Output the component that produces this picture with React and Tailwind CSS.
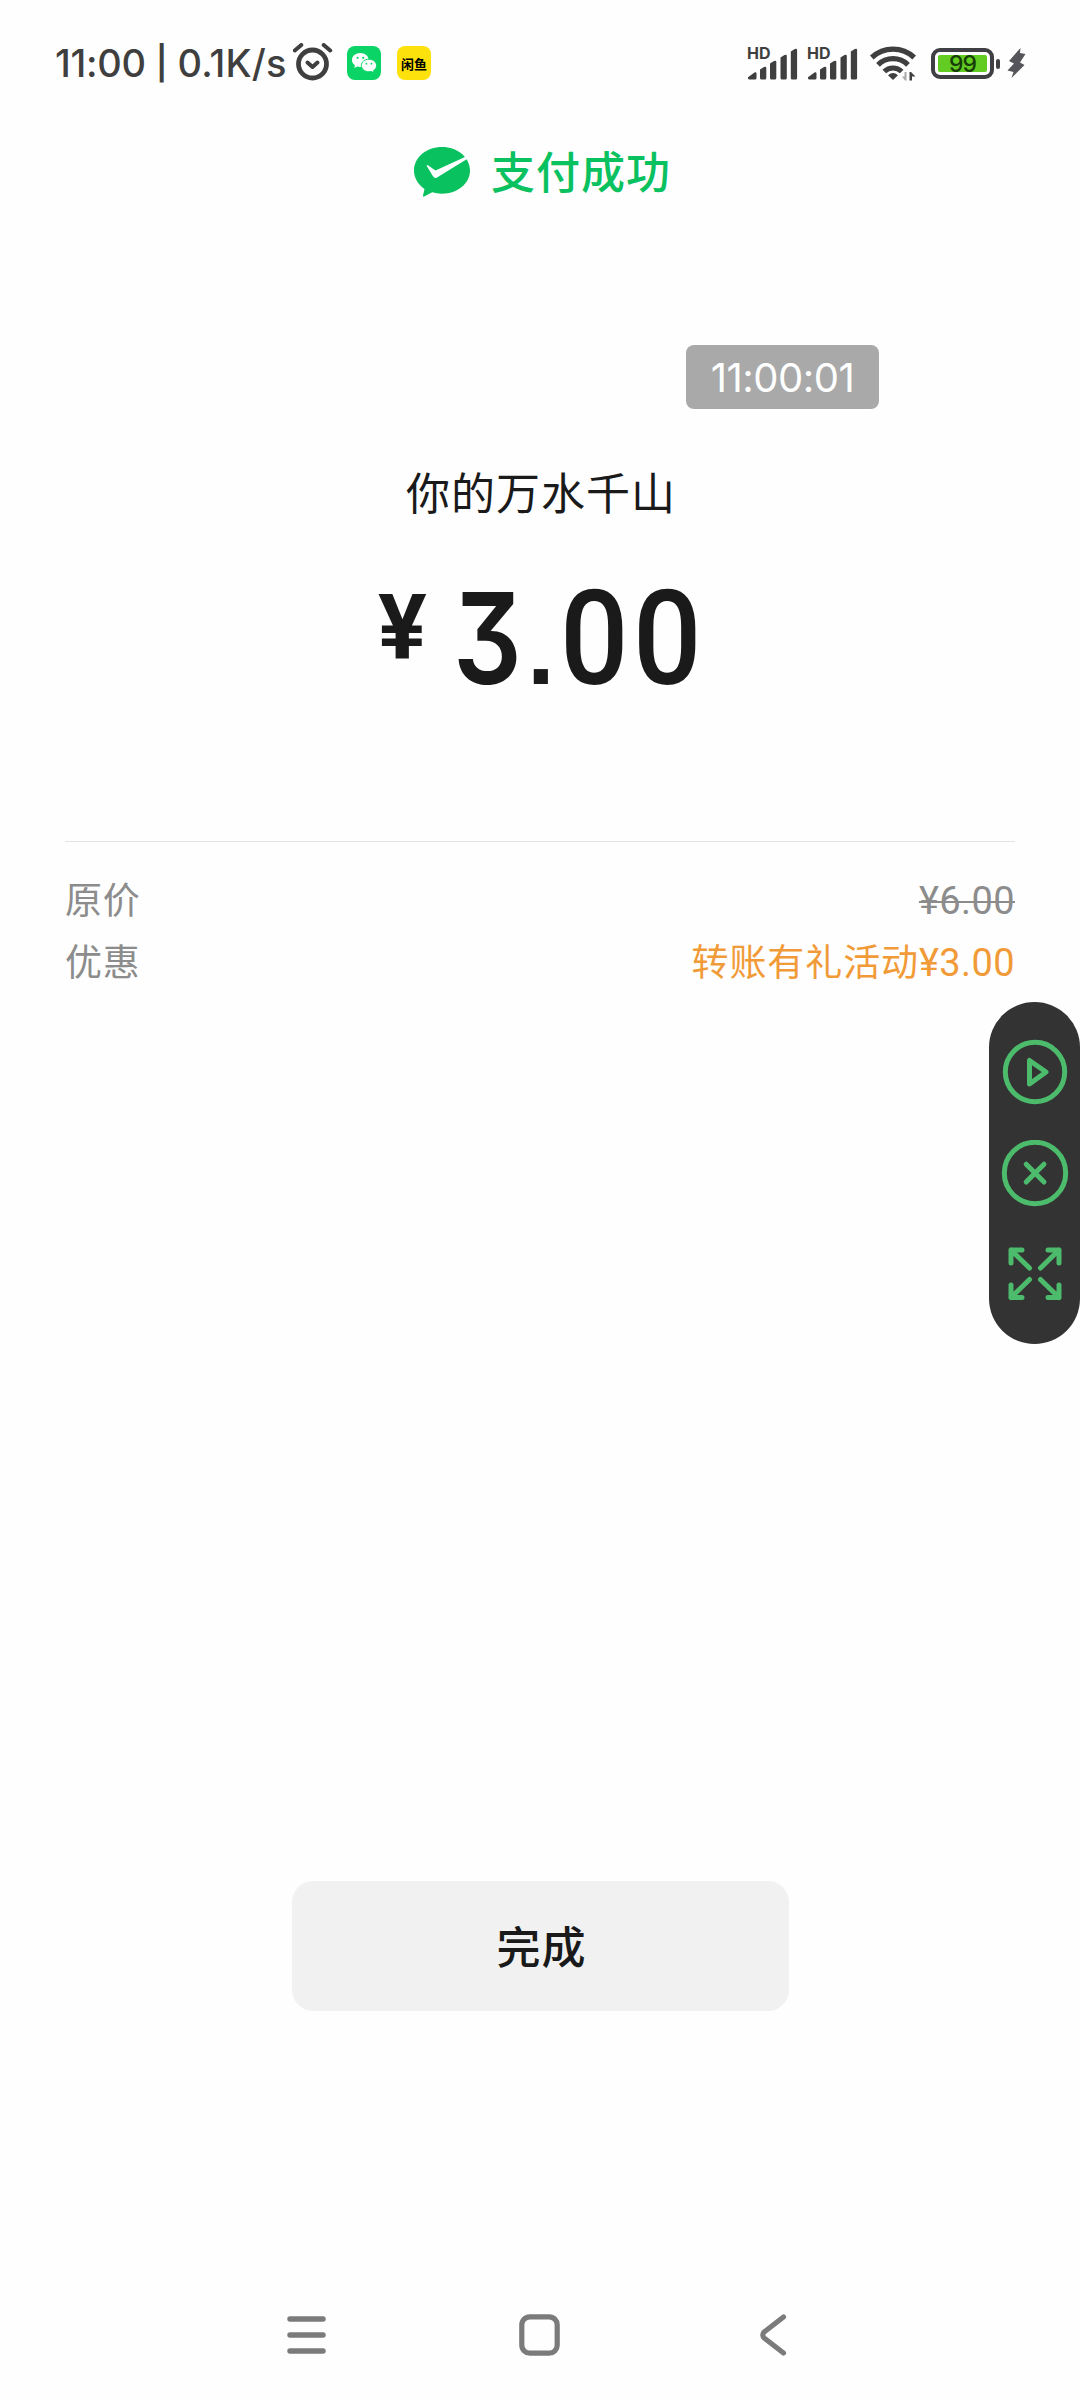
function AlarmIcon() {
    return (
        <svg className="w-10 h-[38px]" viewBox="0 0 40 38" fill="none" stroke="#3f3f3f" strokeLinecap="round">
            <circle cx="19.500" cy="21" r="14" strokeWidth="4.8" />
            <path d="M14.500 19.500l5 4.500 5-4.500" strokeWidth="4" strokeLinejoin="round" />
            <path d="M1.800 7.500l6.500-5.500M37.200 7.500l-6.500-5.500" strokeWidth="4" />
        </svg>
    );
}

function WechatIcon() {
    return (
        <svg className="w-[34px] h-[34px]" viewBox="0 0 34 34">
            <rect width="34" height="34" rx="8" fill="#0bd467" />
            <path d="M13.3 7C8.600 7 5 10 5 14c0 2.300 1.200 4.100 3 5.300l-.8 2.700 3-1.500c1 .3 2 .4 3.100.4 4.700 0 8.300-3 8.300-6.900S18 7 13.300 7z" fill="#fff" />
            <path d="M22 13.200c-4.300 0-7.700 2.800-7.700 6.300s3.400 6.300 7.700 6.300c.9 0 1.700-.1 2.500-.3l2.700 1.400-.7-2.300c1.900-1.200 3.100-3 3.100-5.100 0-3.500-3.400-6.300-7.600-6.300z" fill="#fff" stroke="#0bd467" strokeWidth="1" />
            <circle cx="10.600" cy="11.800" r="1.100" fill="#0bd467" />
            <circle cx="16.200" cy="11.800" r="1.100" fill="#0bd467" />
            <circle cx="19.400" cy="17.700" r=".9" fill="#0bd467" />
            <circle cx="24.400" cy="17.700" r=".9" fill="#0bd467" />
        </svg>
    );
}

function Signal() {
    return (
        <div className="relative w-[51px] h-[33px]">
            <span className='absolute left-0 -top-[1px] text-[16px] leading-[15px] font-bold font-["Inter",sans-serif]'>HD</span>
            <svg className="w-[51px] h-[33px]" viewBox="0 0 51 33" fill="#3f3f3f">
                <path d="M2 29.500l5.500-4a1.200 1.200 0 0 1 2 .8V31A1.500 1.500 0 0 1 8 32.500H3a1.500 1.500 0 0 1-1-3z" />
                <path d="M13 22.500l4-2.500q2.300-1 2.300 1V31a1.500 1.500 0 0 1-1.500 1.500h-3.300A1.500 1.500 0 0 1 13 31z" />
                <path d="M23 16.500l4-2.500q2.300-1 2.300 1V31a1.500 1.500 0 0 1-1.500 1.500h-3.300A1.500 1.500 0 0 1 23 31z" />
                <path d="M33.500 10.500l4-2.500q2.300-1 2.300 1V31a1.500 1.500 0 0 1-1.500 1.500H35A1.500 1.500 0 0 1 33.500 31z" />
                <path d="M43.800 4.500l4-2.500q2.300-1 2.300 1V31a1.500 1.500 0 0 1-1.500 1.500h-3.300A1.500 1.500 0 0 1 43.800 31z" />
            </svg>
        </div>
    );
}

function WifiIcon() {
    return (
        <svg className="w-[47px] h-[35px]" viewBox="0 0 47 35" fill="none" stroke="#3f3f3f" strokeWidth="5.200">
            <path d="M1.800 11.500a31 31 0 0 1 42.400 0" />
            <path d="M8 18.800a21.500 21.500 0 0 1 30 0" />
            <path d="M14.300 25.500a12.500 12.500 0 0 1 17.400 0" />
            <path d="M18 29.200q5-4.400 10 0L23 34z" fill="#3f3f3f" stroke="none" />
            <path d="M36.500 26v8.500h-1.500l-3-4h2.500v-4.500z" fill="#aaa" stroke="none" />
            <path d="M39.500 34.500V26h1.500l4.500 4.500h-3.500v4z" fill="#3f3f3f" stroke="none" />
        </svg>
    );
}

function Battery() {
    return (
        <div className="flex items-center gap-[2px]">
            <div className="w-[63px] h-[31px] rounded-[9px] border-4 border-[#403f44] p-[3px]">
                <div className='w-full h-full pt-[1px] rounded-[2px] bg-[#62cc22] flex items-center justify-center text-[23px] leading-none font-medium text-[#173d08] font-["Inter",sans-serif] tracking-[-1px]'>
                    99
                </div>
            </div>
            <div className="w-1 h-[10px] rounded-[2px] bg-[#403f44]" />
        </div>
    );
}

function StatusBar() {
    return (
        <div className="h-[126px] pt-[45px] pl-[55px] flex items-start text-[#3f3f3f]">
            <span className='w-[236px] flex text-[38px] leading-9 font-medium whitespace-nowrap font-["Inter",sans-serif]'>
                <span className="tracking-[-0.300px]">11:00</span>
                <span className="ml-[10px] text-[33px] font-semibold">|</span>
                <span className="ml-[10px] tracking-[0.200px]">0.1K/s</span>
            </span>
            <div className="ml-[2px] -mt-[1px] h-9 flex items-center">
                <AlarmIcon />
            </div>
            <div className="ml-[14px] mt-[1px] flex gap-4">
                <WechatIcon />
                <div className='w-[34px] h-[34px] rounded-lg bg-[#fde10c] flex items-center justify-center text-[13px] leading-none font-bold text-black whitespace-nowrap font-["Noto_Sans_CJK_SC",sans-serif]'>
                    闲鱼
                </div>
            </div>
            <div className="ml-[316px] mt-[2px] flex gap-[9px]">
                <Signal />
                <Signal />
            </div>
            <div className="ml-[12px] mt-[1px]">
                <WifiIcon />
            </div>
            <div className="ml-[14px] mt-[3px]">
                <Battery />
            </div>
            <svg className="ml-[7px] mt-[3px] w-[19px] h-[30px]" viewBox="0 0 19 30" fill="#55555a">
                <path d="M13.500 0L2 13l5 2.500L.5 22.500l6 1.500L4.500 30 17.500 17l-4.500-2.500L18.500 6 13 5z" />
            </svg>
        </div>
    );
}

function FloatingToolbar() {
    return (
        <div className="absolute right-0 top-[1002px] w-[91px] h-[342px] rounded-full bg-[#333333] flex flex-col items-center pt-[37px]">
            <svg className="w-[68px] h-[68px]" viewBox="0 0 68 68" fill="none" stroke="#4dbb6c" strokeWidth="5" strokeLinejoin="round">
                <circle cx="34" cy="33" r="29.700" />
                <path d="M28.500 21.500v23.500L45 33z" />
            </svg>
            <svg className="mt-[33px] w-[68px] h-[68px]" viewBox="0 0 68 68" fill="none" stroke="#4dbb6c" strokeWidth="5" strokeLinecap="round">
                <circle cx="34" cy="33" r="30.700" />
                <path d="M25.200 24.200l17.800 17.800M43 24.200l-17.800 17.800" />
            </svg>
            <svg className="mt-[39px] w-[54px] h-[54px]" viewBox="0 0 54 54" fill="none" stroke="#4dbb6c" strokeWidth="5" strokeLinecap="round" strokeLinejoin="round">
                <path d="M21.500 21L3 3M3 16V3h11" />
                <path d="M32.500 21L51 3M40 3h11v13" />
                <path d="M21.500 32.500L3 50.500M3 38v12.500h11" />
                <path d="M32.500 32.500l18.500 18M40 50.500h11V38" />
            </svg>
        </div>
    );
}

export default function App() {
    return (
        <div className='relative w-[1080px] h-[2400px] overflow-hidden bg-[#fefefe] text-[#1a1a1a] flex flex-col font-["Roboto","Noto_Sans_CJK_SC",sans-serif]'>
            <StatusBar />

            {/* Result title */}
            <div className="h-[90px] pl-[414px] pt-[2px] flex items-center text-[#0ac160]">
                <svg className="w-[56px] h-[50px]" viewBox="0 0 56 50">
                    <path d="M28 0C12.500 0 0 10.400 0 23.500c0 7.600 4.200 14.200 10.500 18.500L9 48.500q-.3 1.500 1.200 1l8-4.200c3 .9 6.400 1.400 9.800 1.400 15.500 0 28-10.100 28-23.200S43.500 0 28 0z" fill="#0ac160" />
                    <path d="M13 19.500q-1-1.500.5-1.500l8 5.500L52 9.500l1.500 2.300L23 30.500q-2.500 1.500-4-1.200z" fill="#fefefe" />
                </svg>
                <span className="ml-[21px] mt-[3px] text-[44px] leading-[60px] font-medium tracking-[1px]">支付成功</span>
            </div>

            {/* Clock */}
            <div className='ml-[686px] mt-[129px] w-[193px] h-16 pt-[2px] rounded-lg bg-[#a9a9a9] flex items-center justify-center text-white text-[40px] leading-none tracking-[-0.500px] font-["Inter",sans-serif]'>
                11:00:01
            </div>

            <div className="mt-[56px] h-[60px] pl-[2px] flex justify-center text-[44px] leading-[60px] tracking-[1px]">你的万水千山</div>

            {/* Amount */}
            <div className="mt-[50px] h-[132px] pl-[378px] flex items-start">
                <span className="w-[50px] mt-[8px] text-[91px] leading-[91px] font-bold">¥</span>
                <div className="ml-[25px] -mt-[3px] flex items-baseline leading-[132px]">
                    <span className='w-[72px] text-[127px] font-semibold font-["Inter",sans-serif] [font-feature-settings:"cv09"] origin-left scale-x-[0.850]'>3</span>
                    <span className='w-[32px] text-center text-[100px] font-bold font-["Liberation_Sans",sans-serif]'>.</span>
                    <span className="w-[73px] text-center text-[131px] font-medium scale-x-[0.920]">0</span>
                    <span className="w-[73px] text-center text-[131px] font-medium scale-x-[0.920]">0</span>
                </div>
            </div>

            {/* Price details */}
            <div className="mt-[134px] mx-[65px] border-t border-[#e3e3e3] pt-[28px] text-[38px] leading-[62px] text-[#8c8c8c]">
                <div className="flex justify-between">
                    <span className="relative top-[1px] text-[37px] tracking-[0.700px]">原价</span>
                    <span className="line-through decoration-2 tracking-[0.400px]">¥6.00</span>
                </div>
                <div className="flex justify-between">
                    <span className="relative top-[1px] text-[37px] tracking-[0.700px]">优惠</span>
                    <span className="flex text-[#f19b38]">
                        <span className="relative top-[1px] text-[37px] tracking-[0.900px]">转账有礼活动</span>
                        <span className="tracking-[0.400px]">¥3.00</span>
                    </span>
                </div>
            </div>

            <FloatingToolbar />

            <button className="mt-[887px] ml-[292px] w-[497px] h-[130px] pt-[5px] pl-[2px] rounded-[21px] bg-[#f1f1f1] text-[44px] leading-[60px] font-medium tracking-[1px]">
                完成
            </button>

            {/* System navigation */}
            <div className="mt-auto mb-[43px] pl-[287px] h-[44px] flex items-center">
                <svg className="w-[39px] h-[42px]" viewBox="0 0 39 42" stroke="#7b7b7b" strokeWidth="5.500" strokeLinecap="round">
                    <path d="M3 5h33M3 21h33M3 37h33" />
                </svg>
                <svg className="ml-[193px] w-[41px] h-[42px]" viewBox="0 0 41 42" fill="none" stroke="#7b7b7b" strokeWidth="5.200">
                    <rect x="2.800" y="2.800" width="35.400" height="36.400" rx="8" />
                </svg>
                <svg className="ml-[200px] w-[27px] h-[42px]" viewBox="0 0 27 42" fill="none" stroke="#7b7b7b" strokeWidth="5.200" strokeLinecap="round" strokeLinejoin="round">
                    <path d="M23.500 3L4.500 17.700q-3.500 3.300 0 6.600L23.500 39" />
                </svg>
            </div>
        </div>
    );
}
